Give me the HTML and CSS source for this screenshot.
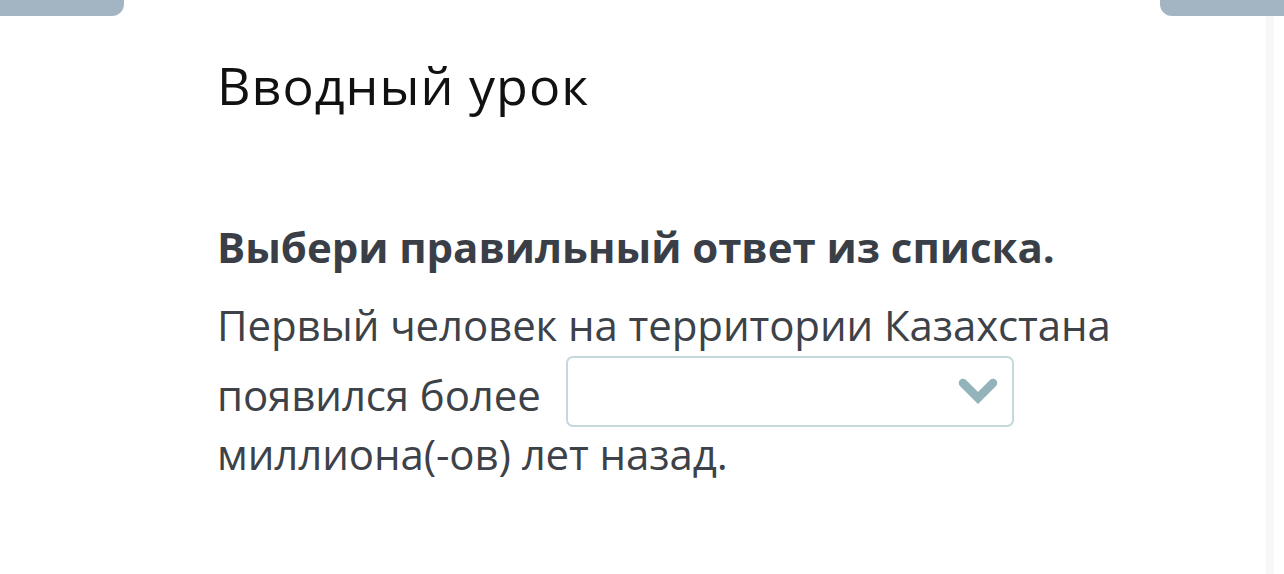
FILE: index.html
```html
<!DOCTYPE html>
<html lang="ru">
<head>
<meta charset="utf-8">
<link rel="stylesheet" href="styles.css">
</head>
<body>
<div class="topbar">
  <div class="tab tab-left"></div>
  <div class="tab tab-right"></div>
</div>
<div class="scrolltrack"></div>
<main class="content">
  <h1 class="title">Вводный урок</h1>
  <p class="task">Выбери правильный ответ из списка.</p>
  <p class="question">Первый человек на территории Казахстана появился более <span class="select"><svg class="chevron" viewBox="0 0 40 26" width="40" height="26"><polyline points="5,5 20,20 35,5" fill="none" stroke="#93b3ba" stroke-width="8.5" stroke-linecap="round" stroke-linejoin="miter"/></svg></span> миллиона(-ов) лет назад.</p>
</main>
</body>
</html>
```

FILE: styles.css
```css
html, body {
  margin: 0;
  padding: 0;
  background: #ffffff;
}
body {
  width: 1284px;
  height: 574px;
  overflow: hidden;
  position: relative;
  font-family: "Open Sans", "Noto Sans", sans-serif;
}
.topbar {
  display: flex;
  justify-content: space-between;
  height: 16px;
}
.tab {
  width: 124px;
  height: 16px;
  background: #a3b4c2;
}
.tab-left {
  border-bottom-right-radius: 12px;
}
.tab-right {
  border-bottom-left-radius: 12px;
}
.scrolltrack {
  position: absolute;
  top: 16px;
  right: 10px;
  width: 8px;
  bottom: 0;
  background: #f7f7f7;
}
.content {
  padding: 40px 0 0 217px;
  width: 950px;
}
.title {
  margin: 0;
  font-weight: 400;
  font-size: 52px;
  letter-spacing: 1px;
  line-height: 57.6px;
  color: #111111;
}
.task {
  margin: 109px 0 0;
  font-weight: 700;
  font-size: 42px;
  letter-spacing: -0.05px;
  line-height: 48px;
  color: #3a3f47;
}
.question {
  margin: 25px 0 0;
  font-weight: 400;
  font-size: 42px;
  letter-spacing: -0.1px;
  line-height: 57px;
  color: #3d4248;
}
.select {
  display: inline-block;
  box-sizing: border-box;
  width: 448px;
  height: 71px;
  margin: 3px 0 -2px 14px;
  border: 2px solid #c5d8db;
  border-radius: 7px;
  vertical-align: -14px;
  position: relative;
}
.chevron {
  position: absolute;
  right: 14px;
  top: 20px;
}
```
